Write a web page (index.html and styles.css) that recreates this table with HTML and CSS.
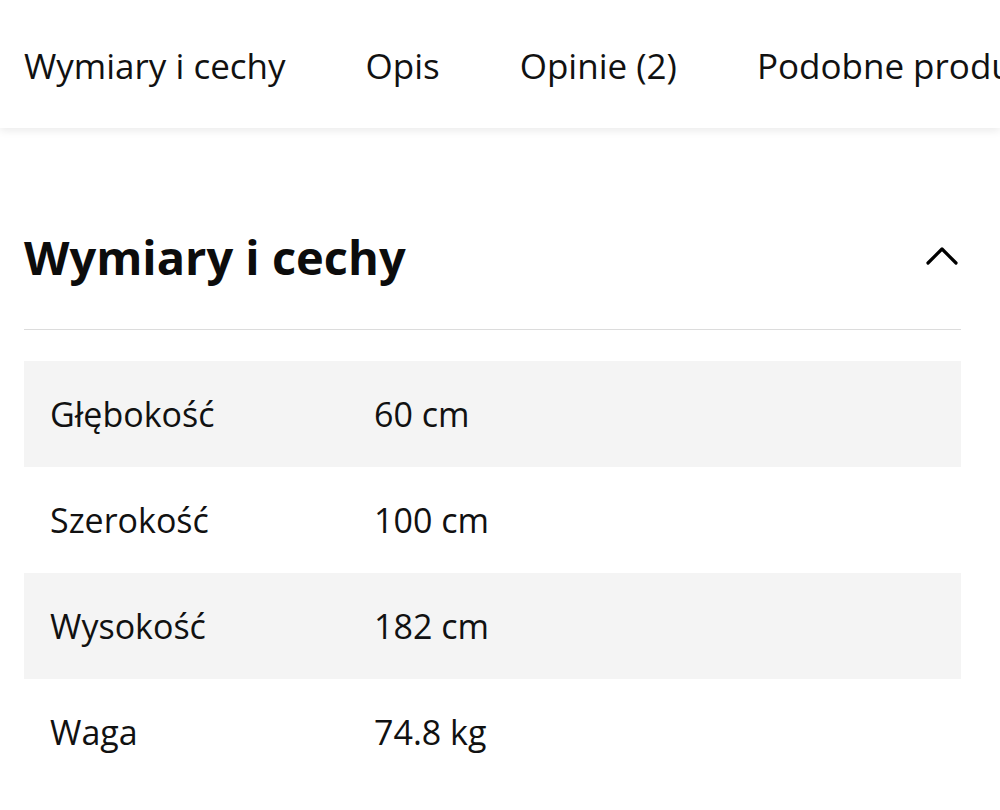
FILE: index.html
```html
<!DOCTYPE html>
<html lang="pl">
<head>
<meta charset="utf-8">
<link rel="stylesheet" href="styles.css">
</head>
<body>
<nav class="tabs">
  <span class="tab">Wymiary i cechy</span>
  <span class="tab">Opis</span>
  <span class="tab">Opinie (2)</span>
  <span class="tab">Podobne produkty</span>
</nav>
<section class="section">
  <header class="section-head">
    <h2 class="section-title">Wymiary i cechy</h2>
    <svg class="chevron" width="34" height="20" viewBox="0 0 34 20"><path d="M3 17 L17 3 L31 17" fill="none" stroke="#000" stroke-width="3.2" stroke-linecap="round" stroke-linejoin="round"/></svg>
  </header>
  <div class="specs">
    <div class="row alt"><span class="label">Głębokość</span><span class="value">60 cm</span></div>
    <div class="row"><span class="label">Szerokość</span><span class="value">100 cm</span></div>
    <div class="row alt"><span class="label">Wysokość</span><span class="value">182 cm</span></div>
    <div class="row"><span class="label">Waga</span><span class="value">74.8 kg</span></div>
  </div>
</section>
</body>
</html>
```

FILE: styles.css
```css
html, body {
  margin: 0;
  padding: 0;
  background: #fff;
  font-family: "Open Sans", "Noto Sans", sans-serif;
  color: #111;
  overflow: hidden;
}
.tabs {
  height: 128px;
  display: flex;
  align-items: center;
  gap: 80px;
  padding-left: 24px;
  white-space: nowrap;
  overflow: hidden;
  background: #fff;
  box-shadow: 0 3px 8px rgba(0, 0, 0, 0.08);
  position: relative;
}
.tab {
  font-size: 35px;
  color: #111;
  padding-top: 2px;
}
.section {
  margin: 0 39px 0 24px;
}
.section-head {
  height: 149px;
  padding-top: 52px;
  display: flex;
  align-items: center;
  justify-content: space-between;
  border-bottom: 1px solid #dcdcdc;
}
.section-title {
  margin: 0;
  font-size: 47px;
  font-weight: 700;
  color: #0c0c0c;
  padding-top: 4px;
}
.chevron {
  margin-right: 2px;
  margin-top: 2px;
}
.specs {
  margin-top: 31px;
}
.row {
  height: 106px;
  display: flex;
  align-items: center;
  padding-left: 26px;
  font-size: 34px;
}
.row.alt {
  background: #f4f4f4;
}
.label {
  width: 324px;
  font-weight: 500;
}
.value {
  font-weight: 400;
}
```
